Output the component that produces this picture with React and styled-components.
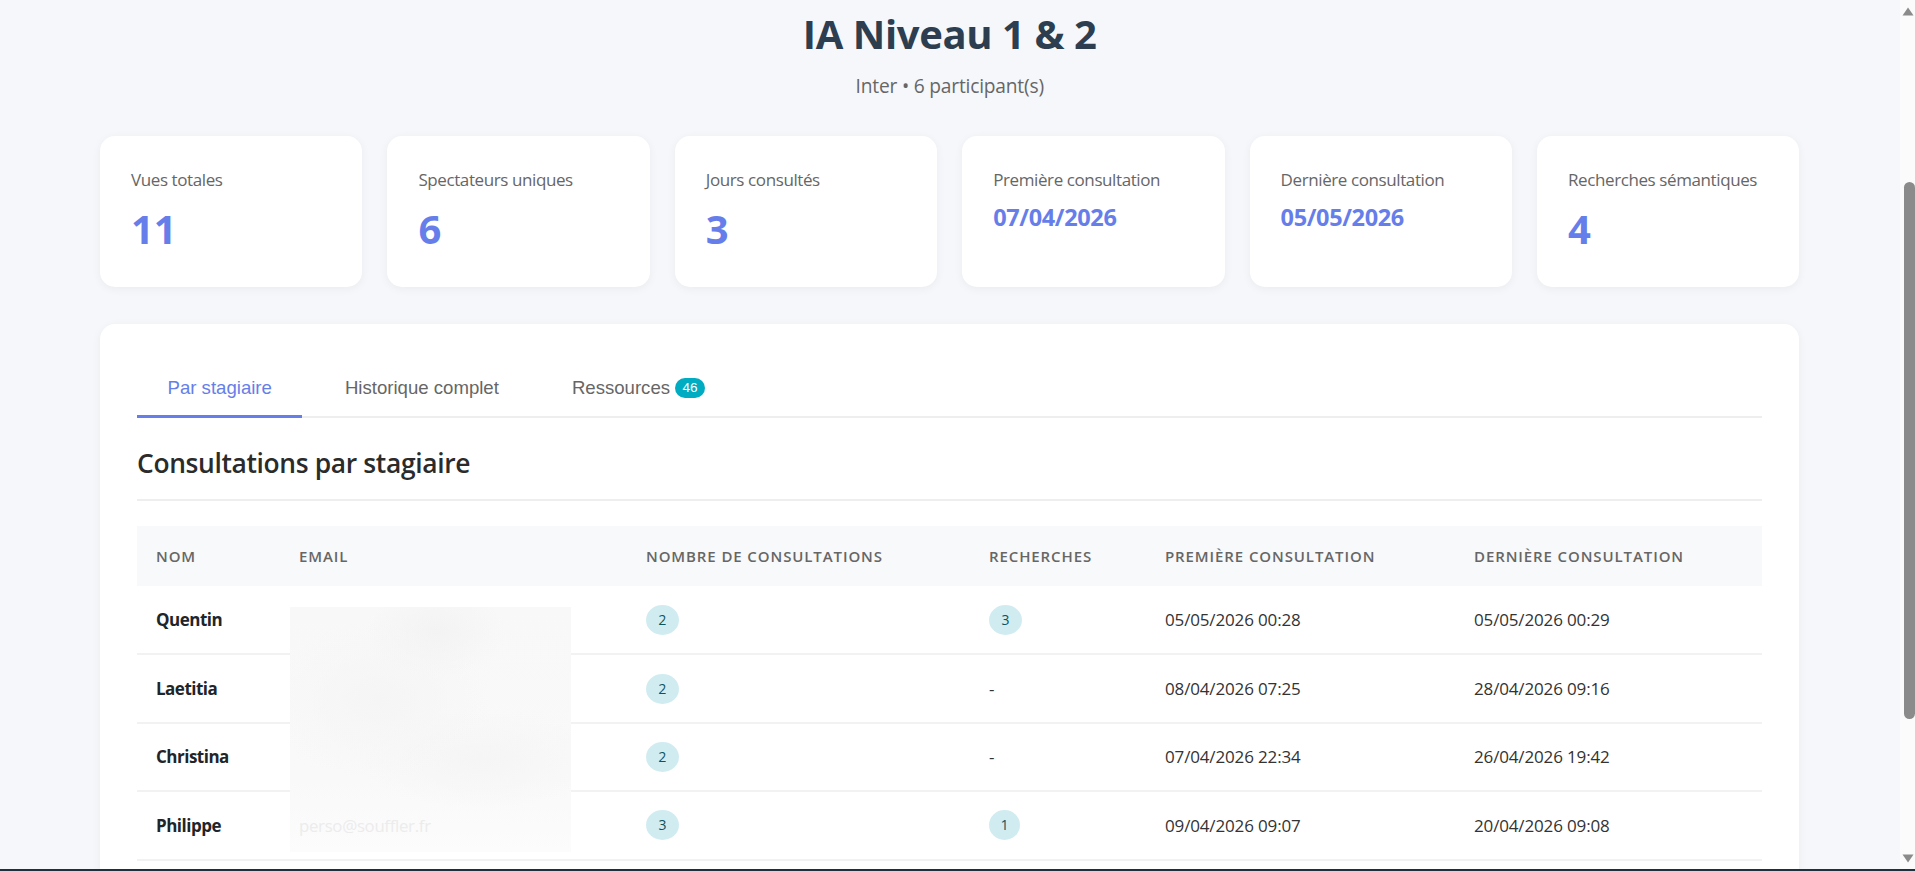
import React from "react";
import styled, { createGlobalStyle } from "styled-components";

const GlobalStyle = createGlobalStyle`
  html, body {
    margin: 0;
    padding: 0;
    height: 100%;
    overflow: hidden;
    background: #f5f7fb;
    font-family: "Open Sans", "Noto Sans", sans-serif;
    color: #212529;
  }
`;

const Screen = styled.div`
  width: 1915px;
  height: 871px;
  display: flex;
  flex-direction: column;
  overflow: hidden;
`;

const Viewport = styled.div`
  flex: 1;
  min-height: 0;
  display: flex;
`;

const Main = styled.main`
  flex: 1;
  min-width: 0;
  padding: 10px 100.6px 0 100px;
  overflow: hidden;
`;

const Header = styled.header`
  text-align: center;
  margin-bottom: 38px;
`;

const Title = styled.h1`
  margin: 0;
  font-size: 40px;
  line-height: 48px;
  font-weight: 700;
  letter-spacing: -0.4px;
  color: #2c3e50;
`;

const Subtitle = styled.p`
  margin: 16px 0 0;
  font-size: 19.2px;
  line-height: 24px;
  letter-spacing: -0.2px;
  color: #666;
`;

const StatGrid = styled.section`
  display: grid;
  grid-template-columns: repeat(6, 1fr);
  gap: 25px;
  margin-bottom: 37px;
`;

const StatCard = styled.div`
  height: 151px;
  box-sizing: border-box;
  padding: 32px 31px;
  background: #fff;
  border-radius: 15px;
  box-shadow: 0 2px 10px rgba(0, 0, 0, 0.05);
`;

const StatLabel = styled.div`
  font-size: 17px;
  line-height: 24px;
  letter-spacing: -0.4px;
  color: #666;
  white-space: nowrap;
`;

const StatValue = styled.div`
  margin-top: ${(p) => (p.$small ? "11px" : "13px")};
  font-size: ${(p) => (p.$small ? "23.5px" : "40px")};
  line-height: ${(p) => (p.$small ? "28px" : "48px")};
  font-weight: 700;
  letter-spacing: ${(p) => (p.$small ? "-0.36px" : "0")};
  color: #667eea;
`;

const Panel = styled.section`
  height: 700px;
  box-sizing: border-box;
  padding: 37px 37.4px 0 37px;
  background: #fff;
  border-radius: 15px;
  box-shadow: 0 2px 10px rgba(0, 0, 0, 0.05);
`;

const TabBar = styled.nav`
  display: flex;
  gap: 12px;
  border-bottom: 2px solid #eee;
`;

const Tab = styled.div`
  display: flex;
  align-items: center;
  gap: 5px;
  height: 57px;
  box-sizing: border-box;
  padding: 0 30.5px;
  margin-bottom: -2px;
  font-family: "Liberation Sans", Arial, sans-serif;
  font-size: 18.6px;
  color: ${(p) => (p.$active ? "#667eea" : "#666")};
  border-bottom: 3px solid ${(p) => (p.$active ? "#667eea" : "transparent")};
`;

const TabBadge = styled.span`
  height: 20px;
  width: 30px;
  border-radius: 10px;
  background: #00acc1;
  color: #fff;
  font-size: 13.5px;
  line-height: 20px;
  text-align: center;
`;

const SectionTitle = styled.h2`
  margin: 0 0 25px;
  padding: 26px 0 17px;
  font-size: 26.4px;
  line-height: 38px;
  font-weight: 600;
  letter-spacing: -0.35px;
  color: #2b2b2b;
  border-bottom: 2px solid #eee;
`;

const TableWrap = styled.div`
  position: relative;
`;

const Table = styled.table`
  width: 100%;
  table-layout: fixed;
  border-collapse: collapse;
`;

const HeadCell = styled.th`
  width: ${(p) => p.$width}px;
  height: 60px;
  padding: 0 0 0 19px;
  box-sizing: border-box;
  background: #f8f9fa;
  font-size: 15px;
  font-weight: 600;
  letter-spacing: 0.9px;
  text-align: left;
  text-transform: uppercase;
  white-space: nowrap;
  color: #666;
`;

const Row = styled.tr`
  height: 68.4px;
  border-bottom: 2px solid #f2f2f2;
`;

const Cell = styled.td`
  padding: 0 0 0 19px;
  font-size: 17px;
  letter-spacing: ${(p) => (p.$name ? "-0.5px" : "-0.15px")};
  font-weight: ${(p) => (p.$name ? 700 : 400)};
  color: ${(p) => (p.$name ? "#212529" : "#333")};
`;

const CountBadge = styled.span`
  display: inline-block;
  padding: 0 12.5px;
  height: 30px;
  border-radius: 50%;
  background: #d1ecf1;
  color: #0c5460;
  font-size: 14px;
  line-height: 30px;
  letter-spacing: 0;
  text-align: center;
  font-variant-numeric: proportional-nums;
`;

// redaction over the email column
const BlurOverlay = styled.div`
  position: absolute;
  top: 81px;
  left: 153px;
  width: 281px;
  height: 245px;
  box-sizing: border-box;
  padding: 0 0 15px 9px;
  display: flex;
  align-items: flex-end;
  background:
    radial-gradient(ellipse 70px 45px at 52% 10%, #f3f3f3 0%, rgba(243, 243, 243, 0) 100%),
    radial-gradient(ellipse 110px 80px at 32% 38%, #f5f5f5 0%, rgba(245, 245, 245, 0) 100%),
    radial-gradient(ellipse 120px 50px at 68% 62%, #f5f5f5 0%, rgba(245, 245, 245, 0) 100%),
    linear-gradient(180deg, #f8f8f8 0%, #f9f9f9 70%, #fcfcfc 100%);
`;

const BlurredEmail = styled.span`
  font-size: 16.8px;
  letter-spacing: -0.3px;
  color: #ececec;
`;

const ScrollTrack = styled.aside`
  width: 15px;
  flex: none;
  position: relative;
  background: #fbfbfb;
`;

const ScrollArrow = styled.svg`
  position: absolute;
  left: 2px;
  width: 12px;
  height: 9px;
  top: ${(p) => (p.$down ? "854px" : "7px")};
  fill: #8b8b8b;
`;

const ScrollThumb = styled.div`
  position: absolute;
  top: 182px;
  left: 4px;
  width: 11px;
  height: 537px;
  border-radius: 6px;
  background: #8b8b8b;
`;

const BottomEdge = styled.div`
  height: 2px;
  flex: none;
  background: #1e2f3d;
`;

const stats = [
  { label: "Vues totales", value: "11" },
  { label: "Spectateurs uniques", value: "6" },
  { label: "Jours consultés", value: "3" },
  { label: "Première consultation", value: "07/04/2026", small: true },
  { label: "Dernière consultation", value: "05/05/2026", small: true },
  { label: "Recherches sémantiques", value: "4" },
];

const columns = [
  { label: "Nom", width: 143 },
  { label: "Email", width: 347 },
  { label: "Nombre de consultations", width: 343 },
  { label: "Recherches", width: 176 },
  { label: "Première consultation", width: 309 },
  { label: "Dernière consultation", width: 307 },
];

const trainees = [
  { name: "Quentin", views: 2, searches: 3, first: "05/05/2026 00:28", last: "05/05/2026 00:29" },
  { name: "Laetitia", views: 2, first: "08/04/2026 07:25", last: "28/04/2026 09:16" },
  { name: "Christina", views: 2, first: "07/04/2026 22:34", last: "26/04/2026 19:42" },
  { name: "Philippe", views: 3, searches: 1, first: "09/04/2026 09:07", last: "20/04/2026 09:08" },
];

export default function App() {
  return (
    <Screen>
      <GlobalStyle />
      <Viewport>
        <Main>
          <Header>
            <Title>IA Niveau 1 &amp; 2</Title>
            <Subtitle>Inter • 6 participant(s)</Subtitle>
          </Header>
          <StatGrid>
            {stats.map((s) => (
              <StatCard key={s.label}>
                <StatLabel>{s.label}</StatLabel>
                <StatValue $small={s.small}>{s.value}</StatValue>
              </StatCard>
            ))}
          </StatGrid>
          <Panel>
            <TabBar>
              <Tab $active>Par stagiaire</Tab>
              <Tab>Historique complet</Tab>
              <Tab>
                Ressources <TabBadge>46</TabBadge>
              </Tab>
            </TabBar>
            <SectionTitle>Consultations par stagiaire</SectionTitle>
            <TableWrap>
              <Table>
                <thead>
                  <tr>
                    {columns.map((c) => (
                      <HeadCell key={c.label} $width={c.width}>
                        {c.label}
                      </HeadCell>
                    ))}
                  </tr>
                </thead>
                <tbody>
                  {trainees.map((t) => (
                    <Row key={t.name}>
                      <Cell $name>{t.name}</Cell>
                      <Cell />
                      <Cell>
                        <CountBadge>{t.views}</CountBadge>
                      </Cell>
                      <Cell>{t.searches ? <CountBadge>{t.searches}</CountBadge> : "-"}</Cell>
                      <Cell>{t.first}</Cell>
                      <Cell>{t.last}</Cell>
                    </Row>
                  ))}
                </tbody>
              </Table>
              <BlurOverlay>
                <BlurredEmail>perso@souffler.fr</BlurredEmail>
              </BlurOverlay>
            </TableWrap>
          </Panel>
        </Main>
        <ScrollTrack>
          <ScrollArrow viewBox="0 0 12 9">
            <path d="M6 0.5 L11.5 8.5 L0.5 8.5 Z" />
          </ScrollArrow>
          <ScrollThumb />
          <ScrollArrow $down viewBox="0 0 12 9">
            <path d="M0.5 0.5 L11.5 0.5 L6 8.5 Z" />
          </ScrollArrow>
        </ScrollTrack>
      </Viewport>
      <BottomEdge />
    </Screen>
  );
}
